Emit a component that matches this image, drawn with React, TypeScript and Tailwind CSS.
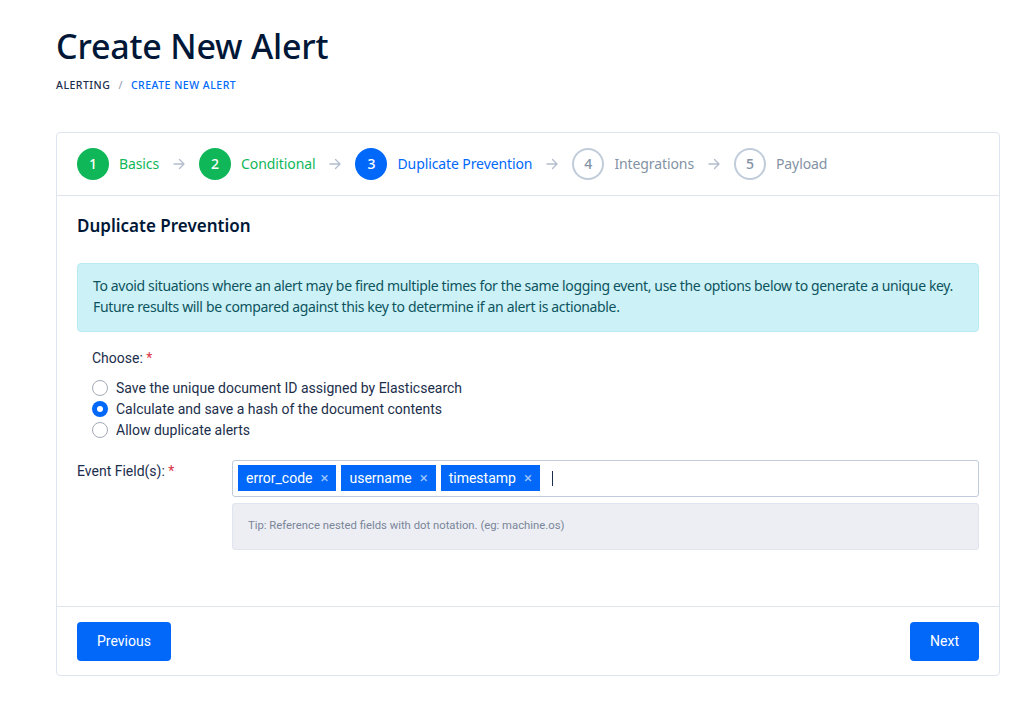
import React from "react";

const plex = { fontFamily: "'Noto Sans', 'Open Sans', sans-serif" };
const roboto = { fontFamily: "Roboto, sans-serif" };

function Arrow() {
  return (
    <svg width="12" height="12" viewBox="0 0 12 12" fill="none" stroke="#b4bdce" strokeWidth="1.4" strokeLinecap="round" strokeLinejoin="round">
      <path d="M1 6h10M6.5 1.5 11 6l-4.5 4.5" />
    </svg>
  );
}

type StepProps = { n: number; label: string; state: "done" | "active" | "todo" };

function Step({ n, label, state }: StepProps) {
  const circle =
    state === "done"
      ? "bg-[#10b759] text-white"
      : state === "active"
      ? "bg-[#0168fa] text-white"
      : "border-2 border-[#c0ccda] text-[#8392a5]";
  const text =
    state === "done" ? "text-[#10b759]" : state === "active" ? "text-[#0168fa]" : "text-[#8392a5]";
  return (
    <div className="flex items-center gap-[10px]">
      <div className={`w-8 h-8 rounded-full flex items-center justify-center text-[14px] font-medium ${circle}`}>{n}</div>
      <span className={`text-[14px] tracking-[-0.1px] ${text}`}>{label}</span>
    </div>
  );
}

function Radio({ checked, label }: { checked?: boolean; label: string }) {
  return (
    <div className="flex items-center h-[21px]">
      {checked ? (
        <div className="w-4 h-4 rounded-full bg-[#0168fa] flex items-center justify-center">
          <div className="w-[6px] h-[6px] rounded-full bg-white" />
        </div>
      ) : (
        <div className="w-4 h-4 rounded-full border border-[#a4aab5] bg-white" />
      )}
      <span className="ml-[8px] text-[14px] text-[#1b2e4b]" style={roboto}>{label}</span>
    </div>
  );
}

function Tag({ label }: { label: string }) {
  return (
    <div className="h-[26px] bg-[#0168fa] text-white flex items-center pl-[8px] pr-[8px] text-[14px]" style={roboto}>
      <span>{label}</span>
      <span className="ml-[8px] text-[#9fc4fd] text-[15px] leading-none">×</span>
    </div>
  );
}

export default function App() {
  return (
    <div className="w-[1034px] h-[712px] bg-white text-[#1b2e4b]" style={plex}>
      <div className="pl-[56px] pr-[34px] pt-[24px]">
        <h1 className="text-[34px] leading-[44px] text-[#001737] font-medium tracking-[-0.2px]">Create New Alert</h1>
        <div className="mt-[10px] flex items-center text-[10.5px] tracking-[0.5px] font-medium uppercase">
          <span className="text-[#1b2e4b]">Alerting</span>
          <span className="mx-[8px] text-[#97a3b9]">/</span>
          <span className="text-[#0168fa]">Create New Alert</span>
        </div>

        <div className="mt-[38px] border border-[#e0e4ee] rounded-[4px]">
          <div className="h-[63px] border-b border-[#e0e4ee] flex items-center pl-[20px] gap-[14px]">
            <Step n={1} label="Basics" state="done" />
            <Arrow />
            <Step n={2} label="Conditional" state="done" />
            <Arrow />
            <Step n={3} label="Duplicate Prevention" state="active" />
            <Arrow />
            <Step n={4} label="Integrations" state="todo" />
            <Arrow />
            <Step n={5} label="Payload" state="todo" />
          </div>

          <div className="px-[20px] pt-[19px] pb-[56px]">
            <h2 className="text-[17px] font-semibold text-[#001737] leading-[22px]">Duplicate Prevention</h2>
            <div className="mt-[26px] bg-[#ccf1f6] border border-[#b8ebf3] rounded-[4px] px-[15px] pt-[11px] pb-[14px] text-[14px] leading-[21px] text-[#0c5460] tracking-[-0.35px]">
              To avoid situations where an alert may be fired multiple times for the same logging event, use the options below to generate a unique key.
              <br />
              Future results will be compared against this key to determine if an alert is actionable.
            </div>

            <div className="mt-[17px] pl-[15px]" style={roboto}>
              <div className="text-[14px] text-[#1b2e4b] leading-[18px]">
                Choose: <span className="text-[#dc3545]">*</span>
              </div>
              <div className="mt-[11px] flex flex-col">
                <Radio label="Save the unique document ID assigned by Elasticsearch" />
                <Radio checked label="Calculate and save a hash of the document contents" />
                <Radio label="Allow duplicate alerts" />
              </div>
            </div>

            <div className="mt-[19px] flex">
              <div className="w-[155px] pt-[1px] text-[14px] text-[#1b2e4b]" style={roboto}>
                Event Field(s): <span className="text-[#dc3545]">*</span>
              </div>
              <div className="flex-1">
                <div className="h-[37px] border border-[#c0ccda] rounded-[3px] flex items-center pl-[5px] gap-[5px]">
                  <Tag label="error_code" />
                  <Tag label="username" />
                  <Tag label="timestamp" />
                  <div className="ml-[7px] w-[1px] h-[15px] bg-[#1b2e4b]" />
                </div>
                <div className="mt-[6px] h-[47px] bg-[#eceef3] border border-[#e0e4ee] rounded-[3px] flex items-center pl-[15px] text-[11.3px] text-[#7a8599]" style={roboto}>
                  Tip: Reference nested fields with dot notation. (eg: machine.os)
                </div>
              </div>
            </div>
          </div>

          <div className="border-t border-[#e0e4ee] px-[20px] pt-[15px] pb-[14px] flex justify-between">
            <button className="h-[39px] px-[20px] bg-[#0168fa] text-white rounded-[4px] text-[14px]" style={roboto}>Previous</button>
            <button className="h-[39px] px-[20px] bg-[#0168fa] text-white rounded-[4px] text-[14px]" style={roboto}>Next</button>
          </div>
        </div>
      </div>
    </div>
  );
}
